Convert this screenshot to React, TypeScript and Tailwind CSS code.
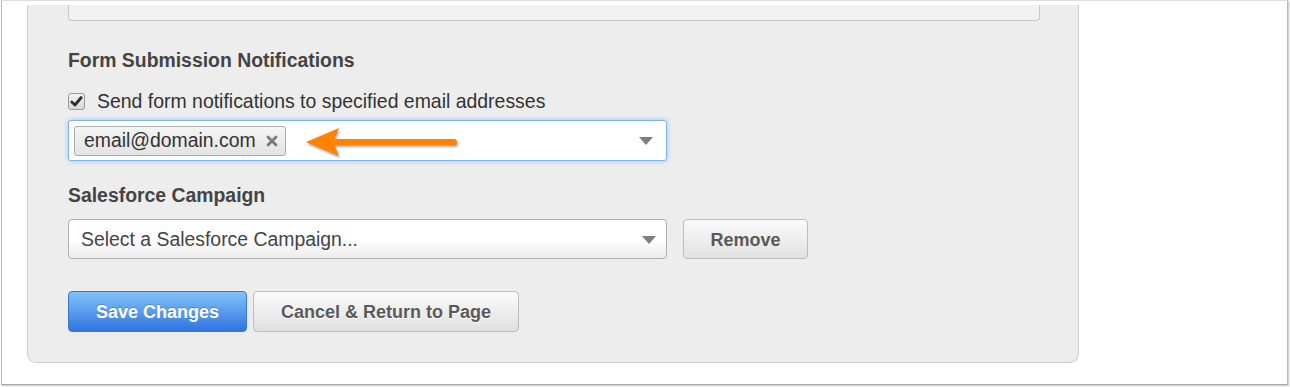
import React from 'react';

const font = {fontFamily: '"Liberation Sans", Arial, sans-serif'};

const Caret: React.FC = () => (
  <svg width="14" height="8" viewBox="0 0 14 8" className="shrink-0">
    <path d="M0 0 L14 0 L7 8 Z" fill="#7f7f7f" />
  </svg>
);

const Checkbox: React.FC = () => (
  <div className="w-[17px] h-[17px] rounded-[3px] border border-[#9a9a9a] bg-gradient-to-b from-[#f4f4f4] to-[#d8d8d8] shrink-0">
    <svg width="15" height="15" viewBox="0 0 15 15">
      <path d="M2.8 8 L6 11 L12.2 3.5" fill="none" stroke="#2e2e2e" strokeWidth="2.8" strokeLinecap="round" strokeLinejoin="round" />
    </svg>
  </div>
);

const TagClose: React.FC = () => (
  <svg width="12" height="12" viewBox="0 0 12 12" className="shrink-0">
    <path d="M2 2 L10 10 M10 2 L2 10" stroke="#7a7a7a" strokeWidth="2.8" strokeLinecap="round" />
  </svg>
);

const Arrow: React.FC = () => (
  <svg
    width="165"
    height="40"
    viewBox="0 0 165 40"
    className="absolute left-[232px] top-[2px] drop-shadow-[1px_2px_1px_rgba(0,0,0,0.35)]"
  >
    <line x1="30" y1="19" x2="153" y2="19" stroke="#ff8300" strokeWidth="6" strokeLinecap="round" />
    <path d="M5 19 L38 5 L32 19 L38 33 Z" fill="#ff8300" />
  </svg>
);

export default function App() {
  return (
    <div className="w-[1290px] h-[387px] bg-white overflow-hidden" style={font}>
      <div className="ml-[1px] w-[1287px] h-[385px] border border-t-[#dedede] border-x-[#b9b9b9] border-b-[#a8a8a8] shadow-[1px_1px_2px_rgba(0,0,0,0.25)] bg-white">
        <div className="ml-[25px] mt-[4px] w-[1052px] bg-[#ededed] border-x border-b border-[#cdcdcd] rounded-b-[9px] pl-[40px] pb-[30px]">
          <div className="w-[972px] h-[16px] bg-[#f2f2f2] border-x border-b border-[#c6c6c6] rounded-b-[4px]" />

          <h2 className="mt-[28px] text-[19.4px] leading-[22px] font-bold text-[#444]">
            Form Submission Notifications
          </h2>

          <div className="mt-[19px] flex items-center gap-[12px] text-[19.45px] leading-[22px] text-[#333]">
            <Checkbox />
            <span>Send form notifications to specified email addresses</span>
          </div>

          <div className="relative mt-[8px] w-[599px] h-[41px] bg-white border border-[#7db6ea] rounded-[3px] shadow-[0_0_5px_rgba(82,168,236,0.55)] flex items-center pl-[5px] pr-[13px]">
            <div className="h-[30px] w-[212px] flex items-center justify-between pl-[9px] pr-[7px] bg-gradient-to-b from-[#f5f5f5] to-[#e3e3e3] border border-[#ababab] rounded-[3px] text-[19.4px] text-[#333]">
              <span>email@domain.com</span>
              <TagClose />
            </div>
            <div className="flex-1" />
            <Caret />
            <Arrow />
          </div>

          <h2 className="mt-[23px] text-[19.4px] leading-[22px] font-bold text-[#444]">
            Salesforce Campaign
          </h2>

          <div className="mt-[13px] flex items-center gap-[16px]">
            <div className="w-[599px] h-[40px] flex items-center pl-[12px] pr-[10px] pt-[1px] bg-gradient-to-b from-white from-50% to-[#ececec] border border-[#b0b0b0] rounded-[4px] text-[19.4px] text-[#444]">
              <span className="flex-1">Select a Salesforce Campaign...</span>
              <Caret />
            </div>
            <button className="w-[125px] h-[40px] pt-[2px] bg-gradient-to-b from-[#fafafa] to-[#e2e2e2] border border-[#bdbdbd] rounded-[4px] text-[18px] font-bold text-[#5a5a5a]">
              Remove
            </button>
          </div>

          <div className="mt-[32px] flex items-center gap-[6px]">
            <button className="w-[179px] h-[41px] pt-[2px] bg-gradient-to-b from-[#84c3f7] to-[#2f73e0] border border-[#3b78d4] rounded-[4px] text-[18px] font-bold text-white [text-shadow:0_-1px_0_rgba(0,0,0,0.2)]">
              Save Changes
            </button>
            <button className="w-[266px] h-[41px] pt-[2px] bg-gradient-to-b from-[#fbfbfb] to-[#e0e0e0] border border-[#bdbdbd] rounded-[4px] text-[18px] font-bold text-[#5a5a5a] [text-shadow:0_1px_0_#fff]">
              Cancel &amp; Return to Page
            </button>
          </div>
        </div>
      </div>
    </div>
  );
}
